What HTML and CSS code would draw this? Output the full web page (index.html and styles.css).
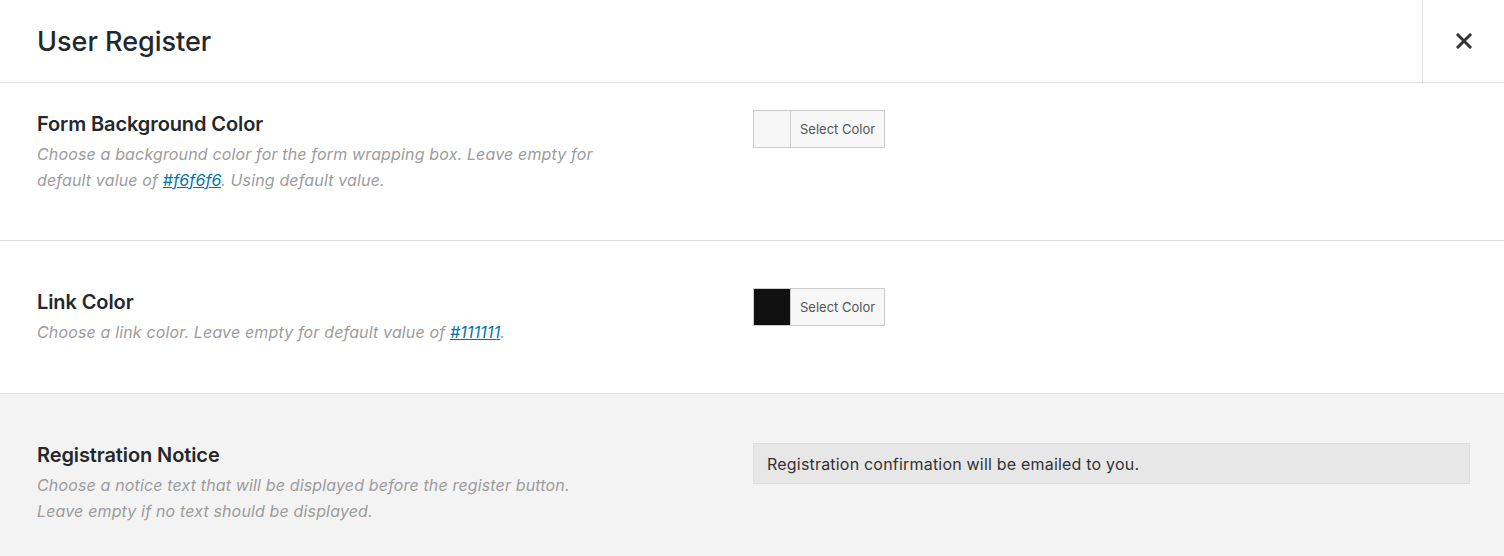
FILE: index.html
```html
<!DOCTYPE html>
<html lang="en">
<head>
  <meta charset="UTF-8">
  <meta name="viewport" content="width=device-width, initial-scale=1.0">
  <title>User Register</title>
  <link rel="stylesheet" href="styles.css">
</head>
<body>

  <div class="modal">
    <!-- Header -->
    <div class="modal-header">
      <h1 class="modal-title">User Register</h1>
      <button class="modal-close" aria-label="Close">
        <svg width="16" height="16" viewBox="0 0 16 16">
          <path d="M2 2 L14 14 M14 2 L2 14" stroke="#333" stroke-width="3" stroke-linecap="square" fill="none"/>
        </svg>
      </button>
    </div>

    <!-- Settings -->
    <div class="setting setting-first">
      <div class="setting-label">
        <h3 class="setting-title">Form Background Color</h3>
        <p class="setting-desc">Choose a background color for the form wrapping box. Leave empty for default value of <a href="#">#f6f6f6</a>. Using default value.</p>
      </div>
      <div class="setting-field">
        <div class="color-picker">
          <span class="color-swatch swatch-light"></span>
          <span class="color-button">Select Color</span>
        </div>
      </div>
    </div>

    <div class="setting">
      <div class="setting-label">
        <h3 class="setting-title">Link Color</h3>
        <p class="setting-desc">Choose a link color. Leave empty for default value of <a href="#">#111111</a>.</p>
      </div>
      <div class="setting-field">
        <div class="color-picker">
          <span class="color-swatch swatch-dark"></span>
          <span class="color-button">Select Color</span>
        </div>
      </div>
    </div>

    <div class="setting setting-muted">
      <div class="setting-label">
        <h3 class="setting-title">Registration Notice</h3>
        <p class="setting-desc">Choose a notice text that will be displayed before the register button. Leave empty if no text should be displayed.</p>
      </div>
      <div class="setting-field">
        <input class="text-input" type="text" value="Registration confirmation will be emailed to you.">
      </div>
    </div>
  </div>

</body>
</html>
```

FILE: styles.css
```css
  body {
    margin: 0;
    padding: 0;
    background-color: #fff;
    font-family: Inter, "Noto Sans", sans-serif;
    color: #23282d;
  }

  .modal {
    background-color: #fff;
  }

  /* Header */
  .modal-header {
    display: flex;
    align-items: center;
    height: 82px;
    border-bottom: 1px solid #ddd;
  }

  .modal-title {
    flex: 1;
    margin: 0;
    padding-left: 37px;
    font-size: 27px;
    font-weight: 500;
  }

  .modal-close {
    width: 82px;
    height: 82px;
    border: 0;
    border-left: 1px solid #ddd;
    background: transparent;
    display: flex;
    justify-content: center;
    align-items: center;
    padding: 0;
    cursor: pointer;
  }

  /* Setting rows */
  .setting {
    display: grid;
    grid-template-columns: 716px 1fr;
    padding: 47px 34px 48px 37px;
    border-bottom: 1px solid #ddd;
  }

  .setting-first {
    padding-top: 27px;
    padding-bottom: 47px;
  }

  .setting-muted {
    background-color: #f3f3f3;
    border-bottom: 0;
    padding-bottom: 32px;
  }

  .setting-title {
    margin: 0;
    font-size: 20px;
    line-height: 28px;
    font-weight: 600;
    letter-spacing: -0.1px;
  }

  .setting-desc {
    margin: 3px 0 0;
    max-width: 575px;
    font-size: 16px;
    line-height: 26px;
    font-style: italic;
    color: #9c9c9c;
    letter-spacing: 0.15px;
  }

  .setting-desc a {
    color: #0073aa;
    text-decoration: underline;
  }

  /* Color picker */
  .color-picker {
    display: inline-flex;
    height: 38px;
    border: 1px solid #ccc;
    box-sizing: border-box;
  }

  .color-swatch {
    width: 36px;
    border-right: 1px solid #ccc;
  }

  .swatch-light { background-color: #f6f6f6; }
  .swatch-dark { background-color: #111; }

  .color-button {
    display: flex;
    align-items: center;
    padding: 0 9px;
    background-color: #f7f7f7;
    font-size: 13px;
    color: #555;
  }

  /* Text input */
  .text-input {
    display: block;
    width: 100%;
    box-sizing: border-box;
    height: 41px;
    margin-top: 2px;
    padding: 0 13px;
    border: 1px solid #ddd;
    background-color: #e8e7e7;
    font-family: Inter, "Noto Sans", sans-serif;
    font-size: 16px;
    letter-spacing: 0.2px;
    color: #333;
  }
```
